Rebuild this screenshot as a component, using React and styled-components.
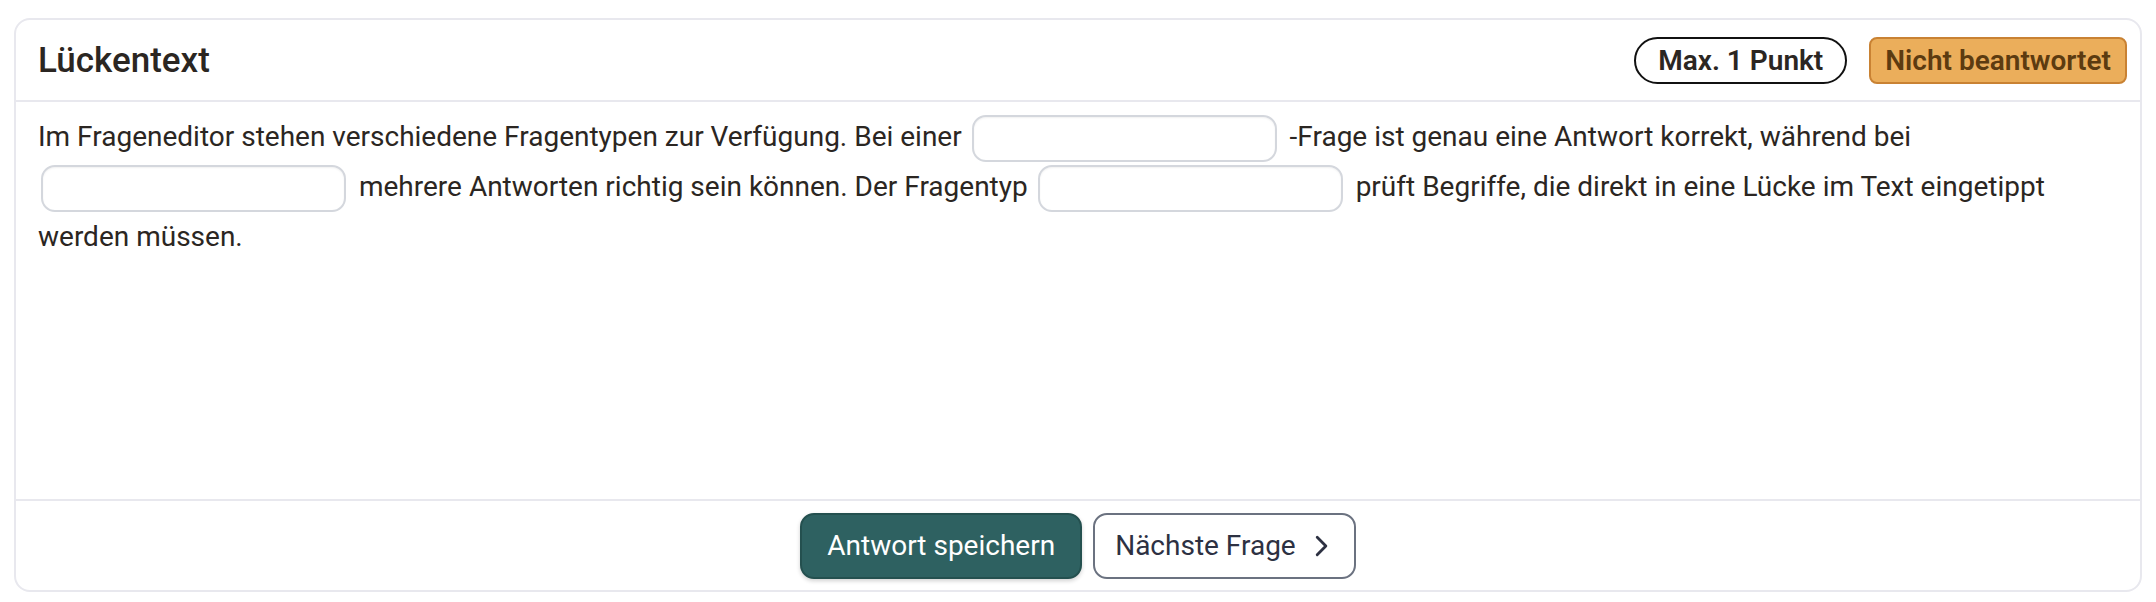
import styled, { createGlobalStyle } from 'styled-components';

const GlobalStyle = createGlobalStyle`
  body {
    margin: 0;
    background: #ffffff;
    font-family: Roboto, "Liberation Sans", sans-serif;
  }
`;

const Page = styled.div`
  padding: 18px 14px 10px;
`;

const Card = styled.div`
  border: 2px solid #e8e8ee;
  border-radius: 16px;
  background: #ffffff;
  display: flex;
  flex-direction: column;
  height: 574px;
  box-sizing: border-box;
`;

const Header = styled.div`
  display: flex;
  align-items: center;
  justify-content: space-between;
  height: 80px;
  padding: 0 13px 0 22px;
  border-bottom: 2px solid #e8e8ee;
`;

const Title = styled.h2`
  margin: 0;
  font-size: 35px;
  font-weight: 500;
  color: #2b2622;
`;

const BadgeRow = styled.div`
  display: flex;
  gap: 22px;
`;

const Badge = styled.span`
  display: inline-flex;
  align-items: center;
  height: 47px;
  box-sizing: border-box;
  padding: 0 ${(p) => (p.$pill ? 22 : 14)}px;
  font-size: 28px;
  font-weight: 600;
  border-radius: ${(p) => (p.$pill ? '24px' : '8px')};
  border: 2px solid ${(p) => (p.$pill ? '#111111' : '#c98233')};
  background: ${(p) => (p.$pill ? '#ffffff' : '#ebae5b')};
  color: ${(p) => (p.$pill ? '#2b2622' : '#5c3b10')};
`;

const Body = styled.div`
  flex: 1;
  padding: 10px 22px;
  font-size: 28px;
  line-height: 49px;
  color: #2b2622;
`;

const Gap = styled.input`
  width: 305px;
  height: 47px;
  box-sizing: border-box;
  margin: 0 6px 0 3px;
  vertical-align: middle;
  border: 2px solid #d4d7dd;
  border-radius: 14px;
  background: #ffffff;
  box-shadow: inset 0 1px 2px rgba(0, 0, 0, 0.06);
  font: inherit;
  outline: none;
`;

const Footer = styled.div`
  display: flex;
  justify-content: center;
  align-items: center;
  gap: 11px;
  height: 89px;
  border-top: 2px solid #e8e8ee;
`;

const Button = styled.button`
  display: inline-flex;
  align-items: center;
  gap: 12px;
  height: 66px;
  box-sizing: border-box;
  padding: 0 ${(p) => (p.$primary ? 25 : 20)}px;
  font-family: Roboto, "Liberation Sans", sans-serif;
  font-size: 28px;
  border-radius: 14px;
  border: ${(p) => (p.$primary ? '2px solid #24504f' : '2px solid #6b7280')};
  background: ${(p) => (p.$primary ? '#2e6161' : '#ffffff')};
  color: ${(p) => (p.$primary ? '#ffffff' : '#2d3142')};
  box-shadow: ${(p) => (p.$primary ? '0 2px 4px rgba(0,0,0,0.18)' : 'none')};
  cursor: pointer;
`;

const Chevron = () => (
  <svg width="26" height="26" viewBox="0 0 24 24" fill="none" stroke="#2d3142" strokeWidth="2.6" strokeLinecap="round" strokeLinejoin="round">
    <path d="M8.5 4 L16.5 12 L8.5 20" />
  </svg>
);

export default function App() {
  return (
    <Page>
      <GlobalStyle />
      <Card>
        <Header>
          <Title>Lückentext</Title>
          <BadgeRow>
            <Badge $pill>Max. 1 Punkt</Badge>
            <Badge>Nicht beantwortet</Badge>
          </BadgeRow>
        </Header>
        <Body>
          Im Frageneditor stehen verschiedene Fragentypen zur Verfügung. Bei einer{' '}
          <Gap type="text" aria-label="Lücke 1" />
          {' '}-Frage ist genau eine Antwort korrekt, während bei{' '}
          <Gap type="text" aria-label="Lücke 2" />
          {' '}mehrere Antworten richtig sein können. Der Fragentyp{' '}
          <Gap type="text" aria-label="Lücke 3" />
          {' '}prüft Begriffe, die direkt in eine Lücke im Text eingetippt werden müssen.
        </Body>
        <Footer>
          <Button $primary>Antwort speichern</Button>
          <Button>
            Nächste Frage
            <Chevron />
          </Button>
        </Footer>
      </Card>
    </Page>
  );
}
